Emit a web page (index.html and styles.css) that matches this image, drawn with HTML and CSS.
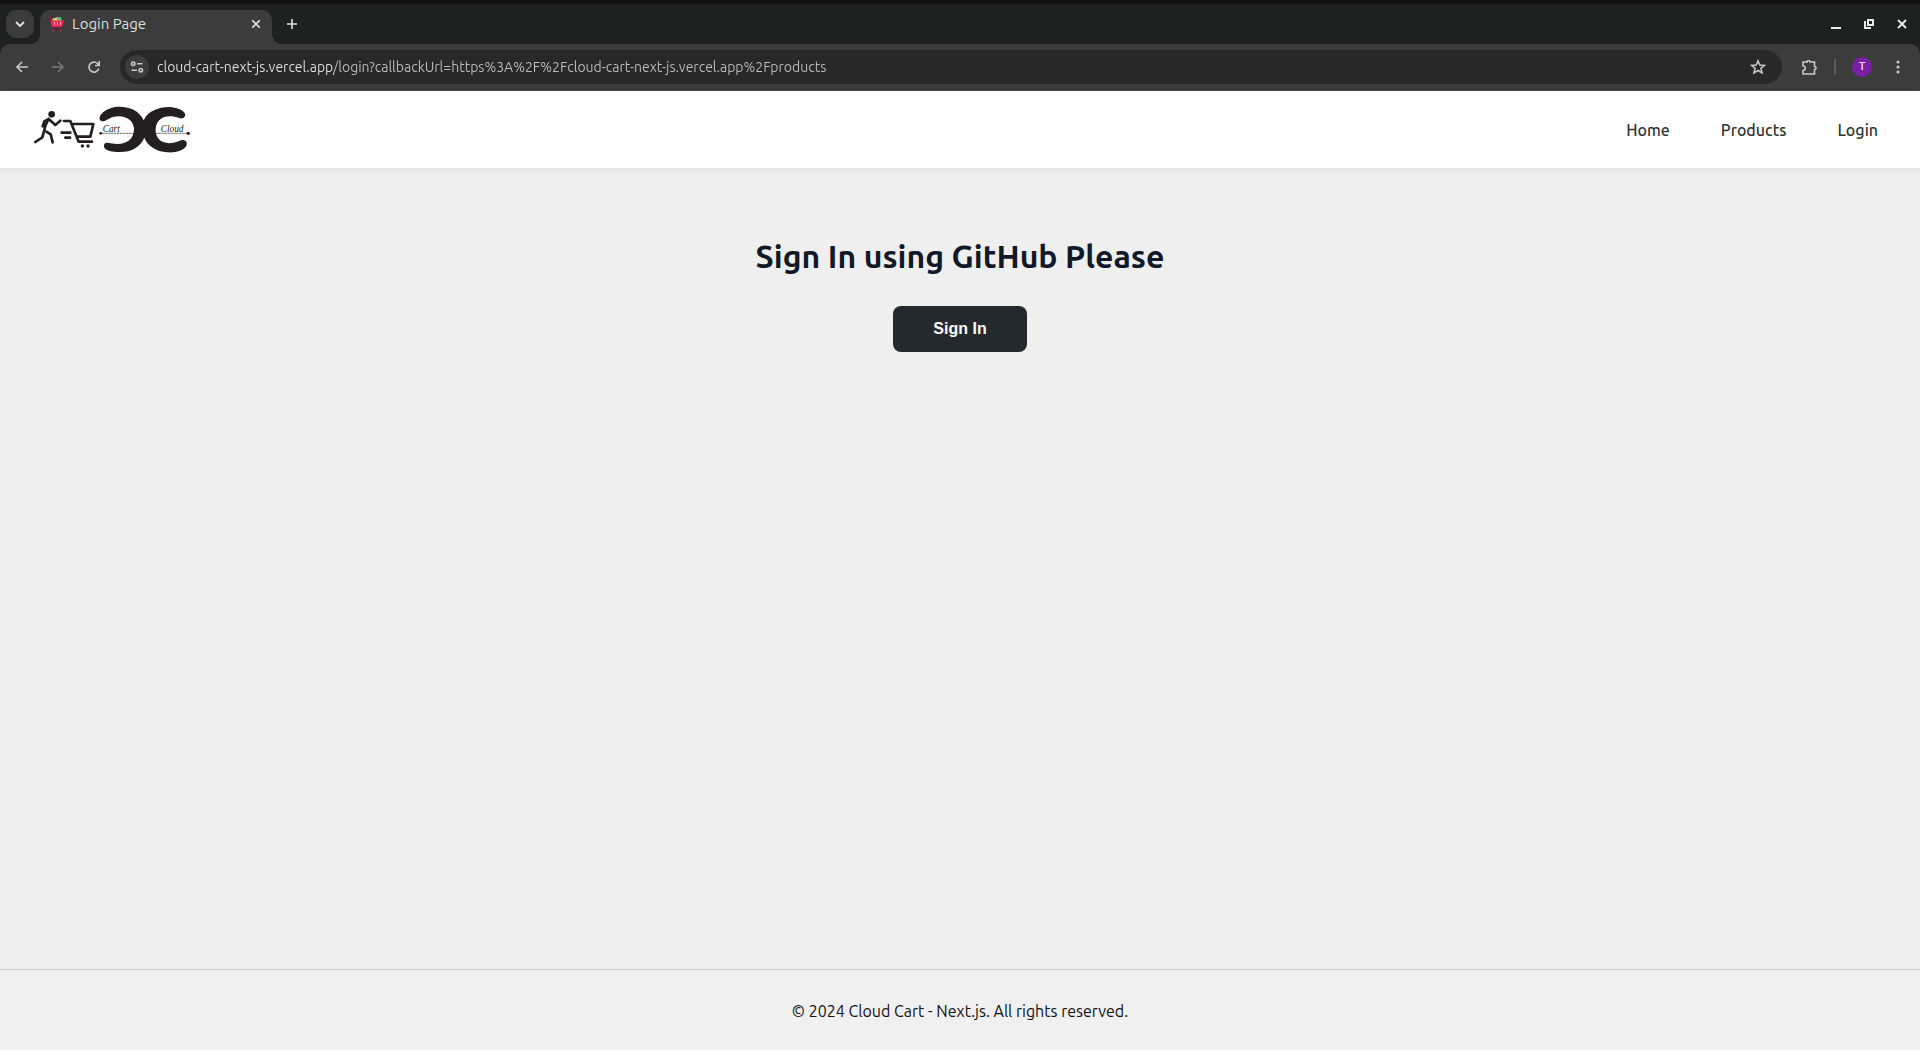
FILE: index.html
```html
<!DOCTYPE html>
<html lang="en">
<head>
<meta charset="utf-8">
<meta name="viewport" content="width=device-width, initial-scale=1">
<title>Login Page</title>
<link rel="stylesheet" href="styles.css">
</head>
<body>
<div class="browser">
  <div class="tab-strip">
    <button class="tab-search" aria-label="Search tabs"><svg width="10" height="6" viewBox="0 0 10 6"><path class="line bold" d="M1 1l4 4 4-4"/></svg></button>
    <div class="tab">
      <svg class="favicon" width="16" height="16" viewBox="0 0 16 16"><path d="M0 1.500h2l2 9" fill="none" stroke="#8a2345"/><path d="M4 3l4-1.500 3-.5v4H5z" fill="#e9c46a"/><path d="M9 2l4-1 1 4H9z" fill="#5cbf78"/><path d="M2.500 4.500H16L14 11H4z" fill="#ed2b55"/><path d="M6.500 6v3M9.500 6v3M12.500 6v3" stroke="#ff9db0"/><path d="M4 12h10" stroke="#6b2240"/><circle cx="5" cy="14.500" r="1" fill="#c92d58"/><circle cx="13" cy="14.500" r="1" fill="#c92d58"/></svg>
      <span class="tab-title">Login Page</span>
      <button class="icon-button tab-close" aria-label="Close tab"><svg width="8" height="8" viewBox="0 0 8 8"><path class="line" d="M0 0l8 8M8 0L0 8"/></svg></button>
    </div>
    <button class="icon-button new-tab" aria-label="New tab"><svg width="12" height="12" viewBox="0 0 12 12"><path class="line" d="M6 1v10M1 6h10"/></svg></button>
    <div class="window-controls">
      <button class="icon-button" aria-label="Minimize"><svg width="10" height="10" viewBox="0 0 10 10"><path d="M0 8h10v2H0z" fill="#e8eaed"/></svg></button>
      <button class="icon-button" aria-label="Restore"><svg width="10" height="10" viewBox="0 0 10 10"><path d="M4 1h5v5H4zM1 2v7h6" fill="none" stroke="#e8eaed" stroke-width="2"/></svg></button>
      <button class="icon-button" aria-label="Close window"><svg width="10" height="10" viewBox="0 0 10 10"><path d="M1 1l8 8M9 1L1 9" stroke="#e8eaed" stroke-width="2"/></svg></button>
    </div>
  </div>
  <div class="toolbar">
    <div class="history">
      <button class="icon-button" aria-label="Back"><svg width="12" height="12" viewBox="0 0 12 12"><path class="line" d="M12 6H1M6 1L1 6l5 5"/></svg></button>
      <button class="icon-button dim" aria-label="Forward"><svg width="12" height="12" viewBox="0 0 12 12"><path class="line" d="M0 6h11M6 1l5 5-5 5"/></svg></button>
      <button class="icon-button" aria-label="Reload"><svg width="12" height="12" viewBox="0 0 12 12"><path class="line" d="M10.800 7.500A5 5 0 1 1 9.500 2.500L11 4.300M11.200 0v4.500H7"/></svg></button>
    </div>
    <div class="address-bar">
      <button class="site-info" aria-label="Site information"><svg width="14" height="12" viewBox="0 0 14 12"><g class="line"><circle cx="3.200" cy="2.800" r="1.700"/><path d="M7 2.800h5.500M1.500 9.200H7"/><circle cx="10.800" cy="9.200" r="1.700"/></g></svg></button>
      <input class="url" type="text" aria-label="Address" value="cloud-cart-next-js.vercel.app/login?callbackUrl=https%3A%2F%2Fcloud-cart-next-js.vercel.app%2Fproducts">
      <button class="icon-button" aria-label="Bookmark"><svg width="16" height="16" viewBox="0 0 16 16"><path class="line" d="M8 1.800l1.800 4.200 4.600.4-3.500 3 1.100 4.500L8 11.500l-4 2.400 1.100-4.500-3.500-3 4.600-.4z"/></svg></button>
    </div>
    <div class="actions">
      <button class="icon-button extensions" aria-label="Extensions"><svg width="18" height="18" viewBox="0 0 18 18"><path class="line" d="M3 3h4a1.500 1.500 0 0 1 3 0h4.500v4.500a1.500 1.500 0 0 1 0 3V15H3v-3.500a2 2 0 0 0 0-4.500z"/></svg></button>
      <span class="divider"></span>
      <button class="profile" aria-label="Profile">T</button>
      <button class="icon-button menu" aria-label="Menu"><svg width="4" height="14" viewBox="0 0 4 14"><g fill="#c7c7c7"><circle cx="2" cy="2" r="1.600"/><circle cx="2" cy="7" r="1.600"/><circle cx="2" cy="12" r="1.600"/></g></svg></button>
    </div>
  </div>
</div>
<header class="site-header">
  <a class="logo" href="#" aria-label="Cloud Cart">
    <svg width="160" height="48" viewBox="36 45 480 144">
      <g fill="none" stroke="#231f20" stroke-linecap="round" stroke-linejoin="round">
        <path stroke-width="8" d="M46 153l21-14 10-37 9-18 20 18 15-13M86 84l-13 7-5 15M79 122l13 8 6 24M132 90h19l25 62h40M157 99h63l-9 38h-40M125 125h26M136 140h14"/>
        <path stroke-width="2" stroke-dasharray="5 4" d="M246 127h94M407 127h94"/>
      </g>
      <path fill="#231f20" d="M240 87C232 70 265 47 297 47 333 47 360 62 371 88 383 62 412 48 449 48 468 49 489 57 494 66 499 77 490 86 478 81 440 67 408 80 407 115 405 151 438 168 483 148 496 144 504 154 499 165 490 180 464 186 442 184 408 181 383 165 373 140 361 168 334 184 297 183 279 183 255 180 252 167 250 155 260 153 272 157 312 165 341 150 342 115 342 79 297 64 261 86 252 92 244 93 240 87z"/>
      <g fill="#231f20"><circle cx="95" cy="70" r="10"/><circle cx="187" cy="165" r="5"/><circle cx="204" cy="165" r="5"/><circle cx="242" cy="127" r="4"/><circle cx="505" cy="127" r="5"/></g>
      <text class="logo-word" x="248" y="124">Cart</text>
      <text class="logo-word" x="422" y="122">Cloud</text>
    </svg>
  </a>
  <nav class="site-nav"><a href="#">Home</a><a href="#">Products</a><a href="#">Login</a></nav>
</header>
<main class="login">
  <h1>Sign In using GitHub Please</h1>
  <button class="sign-in">Sign In</button>
</main>
<footer class="site-footer"><p>© 2024 Cloud Cart - Next.js. All rights reserved.</p></footer>
</body>
</html>
```
FILE: styles.css
```css
* { box-sizing: border-box; }
body {
  margin: 0;
  min-height: 100vh;
  display: flex;
  flex-direction: column;
  background: #efefef;
  color: #111;
  font-family: Ubuntu, "Noto Sans", sans-serif;
}
button { border: 0; padding: 0; background: none; font: inherit; color: inherit; cursor: pointer; }
svg { display: block; flex: none; }
.line { fill: none; stroke: currentColor; stroke-width: 1.6; }
.line.bold { stroke-width: 2; }

.browser { background: #1f2120; color: #dedede; border-top: 4px solid #131313; }
.tab-strip { display: flex; align-items: center; height: 40px; padding: 0 10px 0 6px; }
.tab-search { display: grid; place-items: center; width: 28px; height: 28px; border-radius: 10px; background: #3c3c3c; }
.tab {
  position: relative;
  align-self: flex-end;
  display: flex;
  align-items: center;
  gap: 8px;
  width: 232px;
  height: 34px;
  margin-left: 6px;
  padding: 0 8px 6px;
  border-radius: 10px 10px 0 0;
  background: #3c3c3c;
}
.tab::before, .tab::after {
  content: "";
  position: absolute;
  bottom: 0;
  width: 10px;
  height: 10px;
}
.tab::before { left: -10px; background: radial-gradient(circle at 0 0, transparent 10px, #3c3c3c 10px); }
.tab::after { right: -10px; background: radial-gradient(circle at 100% 0, transparent 10px, #3c3c3c 10px); }
.tab-title { flex: 1; font-size: 15px; line-height: 20px; }
.icon-button { display: grid; place-items: center; flex: none; width: 16px; height: 16px; }
.new-tab { margin-left: 12px; }
.window-controls { display: flex; gap: 17px; margin-left: auto; }
.toolbar {
  display: flex;
  align-items: center;
  gap: 18px;
  height: 47px;
  padding: 0 12px 0 14px;
  border-bottom: 1px solid #4a4a4a;
  border-radius: 10px 10px 0 0;
  background: #3c3c3c;
  color: #c7c7c7;
}
.history { display: flex; align-items: center; gap: 20px; }
.actions { display: flex; align-items: center; gap: 16px; }
.extensions { width: 18px; }
.menu { width: 20px; }
.dim { color: #777; }
.address-bar {
  flex: 1;
  display: flex;
  align-items: center;
  gap: 8px;
  height: 34px;
  padding: 0 16px 0 5px;
  border-radius: 17px;
  background: #282828;
}
.site-info { display: grid; place-items: center; width: 24px; height: 24px; border-radius: 12px; background: #3c3c3c; }
.url {
  flex: 1;
  min-width: 0;
  padding: 0;
  border: 0;
  outline: 0;
  background: linear-gradient(90deg, #e3e3e3 177px, #bdbdbd 177px);
  background-clip: text;
  color: transparent;
  font: 14px/20px Ubuntu, "Noto Sans", sans-serif;
}
.divider { width: 2px; height: 16px; background: #5c5c5c; }
.profile { width: 20px; height: 20px; border-radius: 10px; background: #7b1fa2; color: #e8d5ee; font: 500 11px/20px Roboto, sans-serif; }

.site-header {
  position: relative;
  display: flex;
  align-items: center;
  justify-content: space-between;
  height: 77px;
  padding: 0 42px 0 32px;
  background: #fff;
  box-shadow: 0 2px 8px rgba(0, 0, 0, .06);
}
.logo-word { font: italic 28px "Liberation Serif", serif; fill: #231f20; }
.site-nav { display: flex; gap: 51px; }
.site-nav a { color: #333; font-size: 16px; font-weight: 500; line-height: 24px; text-decoration: none; }
.login { flex: 1; display: flex; flex-direction: column; align-items: center; gap: 26px; padding: 64px 16px; }
.login h1 { margin: 0; color: #111827; font-size: 32px; font-weight: 600; line-height: 48px; }
.sign-in {
  padding: 12px 40px;
  border-radius: 8px;
  background: #24292f;
  color: #fff;
  font: bold 16px/22px "Liberation Sans", Arial, sans-serif;
}
.site-footer { border-top: 1px solid #c8c8c8; padding: 29px 16px 27px; background: #f0f0f0; text-align: center; }
.site-footer p { margin: 0; font-size: 16px; line-height: 24px; }
```
